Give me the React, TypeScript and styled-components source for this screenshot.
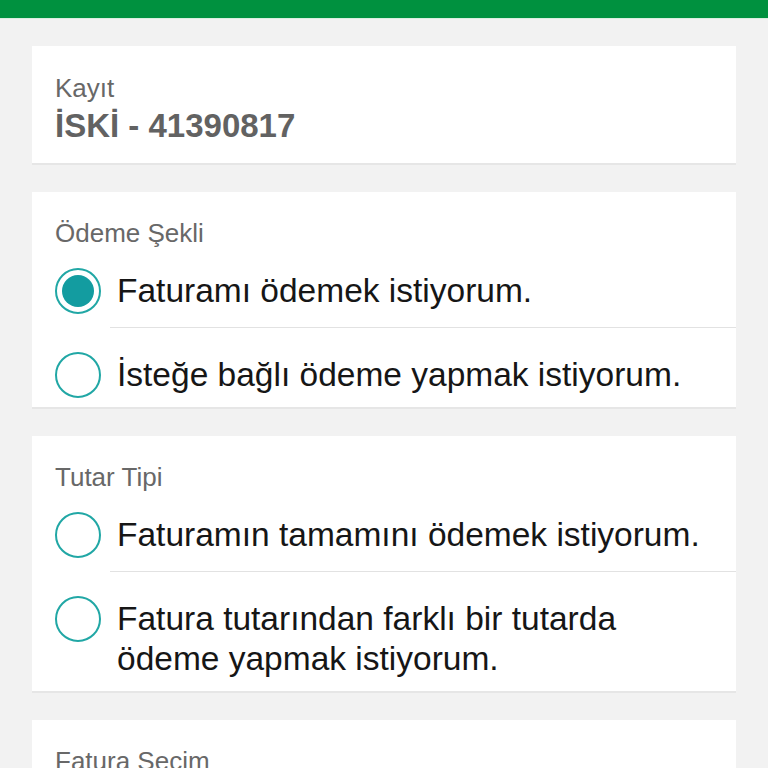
import React from "react";
import styled, { createGlobalStyle } from "styled-components";

const GlobalStyle = createGlobalStyle`
  html, body {
    margin: 0;
    padding: 0;
    background: #f2f2f2;
    font-family: "Liberation Sans", Arial, Helvetica, sans-serif;
    -webkit-font-smoothing: antialiased;
  }
`;

const Page = styled.div`
  min-height: 768px;
  background: #f2f2f2;
`;

const TopBar = styled.div`
  height: 18px;
  background: #00913f;
  border-bottom: 1px solid #d9eee0;
`;

const Content = styled.div`
  display: flex;
  flex-direction: column;
  gap: 27px;
  padding: 27px 32px 40px;
`;

const Card = styled.section<{ $top?: number; $bottom?: number }>`
  background: #ffffff;
  border-bottom: 2px solid #e6e6e6;
  padding: ${(p) => p.$top ?? 31}px 0 ${(p) => p.$bottom ?? 0}px 23px;
`;

const Label = styled.div`
  font-size: 26px;
  line-height: 21px;
  color: #686868;
`;

const Value = styled.div`
  margin-top: 8px;
  font-size: 33px;
  line-height: 38px;
  font-weight: 700;
  color: #626262;
`;

const Row = styled.label`
  display: flex;
  align-items: flex-start;
  cursor: pointer;
`;

const Radio = styled.span<{ $checked?: boolean }>`
  flex: none;
  box-sizing: border-box;
  width: 46px;
  height: 46px;
  margin-top: 24px;
  margin-right: 9px;
  border-radius: 50%;
  border: 2px solid #21a7a5;
  display: flex;
  align-items: center;
  justify-content: center;

  &::after {
    content: "";
    display: ${(p) => (p.$checked ? "block" : "none")};
    width: 32px;
    height: 32px;
    border-radius: 50%;
    background: #139ca0;
  }
`;

const OptionText = styled.span<{ $divider?: boolean }>`
  flex: 1;
  padding: 27px 16px ${(p) => (p.$divider ? 16 : 12)}px 7px;
  font-size: 33.5px;
  line-height: 40px;
  color: #161616;
  border-bottom: ${(p) => (p.$divider ? "1px solid #e2e2e2" : "none")};
`;

type Option = { text: React.ReactNode; checked?: boolean };

const RadioGroup: React.FC<{ title: string; options: Option[] }> = ({ title, options }) => (
  <Card>
    <Label>{title}</Label>
    {options.map((o, i) => (
      <Row key={i}>
        <Radio $checked={o.checked} />
        <OptionText $divider={i < options.length - 1}>{o.text}</OptionText>
      </Row>
    ))}
  </Card>
);

export default function App() {
  return (
    <>
      <GlobalStyle />
      <Page>
        <TopBar />
        <Content>
          <Card $top={32} $bottom={18}>
            <Label>Kayıt</Label>
            <Value>İSKİ - 41390817</Value>
          </Card>
          <RadioGroup
            title="Ödeme Şekli"
            options={[
              { text: "Faturamı ödemek istiyorum.", checked: true },
              { text: "İsteğe bağlı ödeme yapmak istiyorum." },
            ]}
          />
          <RadioGroup
            title="Tutar Tipi"
            options={[
              { text: "Faturamın tamamını ödemek istiyorum." },
              {
                text: (
                  <>
                    Fatura tutarından farklı bir tutarda
                    <br />
                    ödeme yapmak istiyorum.
                  </>
                ),
              },
            ]}
          />
          <Card $bottom={40}>
            <Label>Fatura Seçim</Label>
          </Card>
        </Content>
      </Page>
    </>
  );
}
